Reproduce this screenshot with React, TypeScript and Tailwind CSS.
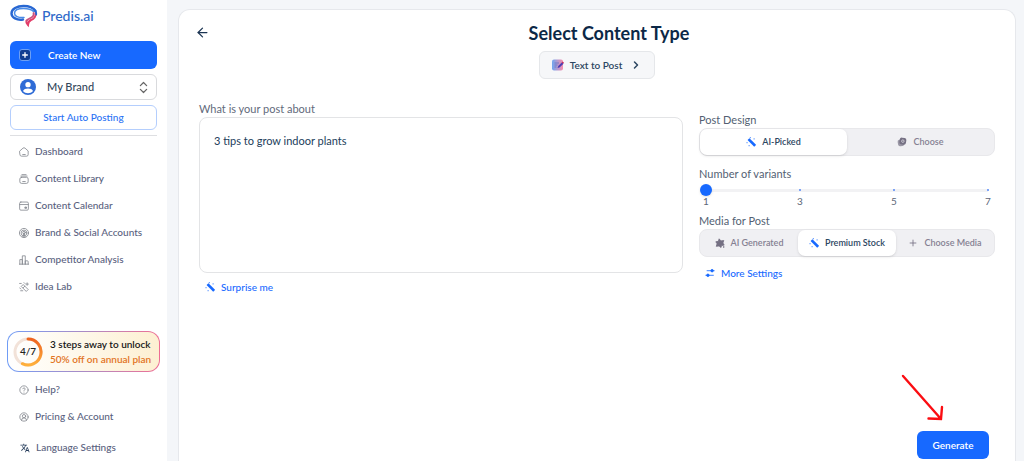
import { useState, type ComponentType, type ReactNode } from "react";
import clsx from "clsx";
import { ArrowLeft, ChevronRight, ChevronsUpDown, CircleHelp, CircleUserRound, Plus } from "lucide-react";
import { MdTranslate } from "react-icons/md";

const VARIANTS = [1, 3, 5, 7];

interface IconProps {
    className?: string;
}

function Line({ className, children }: IconProps & { children: ReactNode }) {
    return (
        <svg viewBox="0 0 24 24" fill="none" stroke="currentColor" strokeWidth="2" strokeLinecap="round" strokeLinejoin="round" className={className}>
            {children}
        </svg>
    );
}

const HomeIcon = ({ className }: IconProps) => (
    <Line className={className}>
        <path d="M2 9.500 9.500 2.800a4 4 0 0 1 5 0L22 9.500V18a4 4 0 0 1-4 4H6a4 4 0 0 1-4-4z" />
        <path d="M9 18h6" />
    </Line>
);

const LibraryIcon = ({ className }: IconProps) => (
    <Line className={className}>
        <path d="M7 1.500h10M4.500 5h15" />
        <rect x="2" y="8" width="20" height="14.500" rx="4" />
        <path d="M9 18h6" />
    </Line>
);

const CalendarIcon = ({ className }: IconProps) => (
    <Line className={className}>
        <rect x="1.500" y="2.500" width="21" height="19.500" rx="3" />
        <path d="M2 8.500h20" />
        <rect x="15" y="14.500" width="3" height="3" fill="currentColor" />
    </Line>
);

const TargetIcon = ({ className }: IconProps) => (
    <Line className={className}>
        <circle cx="12" cy="12" r="11" />
        <circle cx="12" cy="12" r="7" />
        <circle cx="12" cy="11" r="3" />
        <path d="M12 13v9M9 21l3-7 3 7" />
    </Line>
);

const ChartIcon = ({ className }: IconProps) => (
    <Line className={className}>
        <path d="M2 22V11h6v11M8 22V2h7v20M15 22v-8h5a2 2 0 0 1 2 2v6M1 22h22" />
    </Line>
);

const LabIcon = ({ className }: IconProps) => (
    <Line className={className}>
        <path d="m6 10 4-4 12 12-4 4zM10 14l4-4" />
        <path d="M1.500 3.500h4M12 1.500l2 2M19.500 2v6M16.500 5h6M1.500 14l3 3M4 21h5" />
    </Line>
);

const WandIcon = ({ className }: IconProps) => (
    <svg viewBox="0 0 24 24" fill="currentColor" className={className}>
        <path d="m6 5 16 16" stroke="currentColor" strokeWidth="6.500" />
        <g opacity=".6">
            <path d="M9 0h3v3H9zM18 3h3v3h-3zM1 12h3v3H1zM6 19h3v3H6z" />
        </g>
    </svg>
);

const SparkIcon = ({ className }: IconProps) => (
    <svg viewBox="0 0 24 24" fill="currentColor" stroke="currentColor" strokeLinejoin="round" strokeWidth="2" className={className}>
        <path d="m10 2 4 5 7-1-2 6 3 5-6 1-2 5-4-4-7 1 2-6-3-5 6-1z" />
        <circle cx="21" cy="21.500" r="1" />
    </svg>
);

const CardsIcon = ({ className }: IconProps) => (
    <svg viewBox="0 0 24 24" className={className}>
        <rect x="2" y="6" width="15" height="16" rx="5" fill="currentColor" opacity=".7" transform="rotate(-10 9 14)" />
        <rect x="6" y="2" width="16" height="16" rx="5" fill="currentColor" transform="rotate(10 14 10)" />
        <circle cx="14" cy="10" r="3" fill="none" stroke="#d6d4dc" strokeWidth="2" />
    </svg>
);

const SlidersIcon = ({ className }: IconProps) => (
    <svg viewBox="0 0 24 24" fill="none" stroke="currentColor" strokeWidth="2" className={className}>
        <path d="M4 6.500h19M1 17.500h20" />
        <circle cx="17" cy="6.500" r="3" fill="currentColor" />
        <circle cx="7" cy="17.500" r="3" fill="currentColor" />
    </svg>
);

const NoteIcon = ({ className }: IconProps) => (
    <svg viewBox="0 0 24 24" fill="none" className={className}>
        <defs>
            <linearGradient id="note" x1="0" y1="0" x2="1" y2="0">
                <stop stopColor="#6fa6f0" />
                <stop offset="1" stopColor="#f98ead" />
            </linearGradient>
        </defs>
        <rect x="0" y="1" width="22" height="22" rx="4" fill="url(#note)" />
        <path d="M5 8h9M5 12h6M5 16h4" stroke="#5f6fc0" strokeWidth="1.500" />
        <path d="m11 18 1.500-4 7.500-7.500 3 3-8 7.500z" fill="#4b3fb5" />
        <path d="m19.500 7 2-2 2.500 2.500-2 2z" fill="#c82d5c" />
    </svg>
);

function Logo() {
    return (
        <a href="#" className="flex items-center gap-1 text-[#2e69c9]">
            <svg viewBox="0 0 28 24" fill="none" strokeLinecap="round" className="h-6 w-7">
                <path d="M13 15.500C7 16.500 1.500 13.500 1.500 9.500 1.500 5 7 2 13.500 2c5.500 0 10 1.800 12 5" stroke="#2867d2" strokeWidth="2.400" />
                <path d="M14 13.500C8 14 4.500 12 4.500 9.200c0-3 4-4.700 9-4.700 4.500 0 8 1 10 3" stroke="#4a8ce8" strokeWidth="1.500" />
                <path d="M25.500 9c1 3-1.500 6-4.500 7-2 .8-2.800 2.500-3 5-1.500-1.500-2-3-1.500-4.500" stroke="#e33d68" strokeWidth="2" />
                <path d="M23.500 9c.8 2.500-1.500 4.500-4 5.500-1.500.6-2.500 1.200-3 2.500" stroke="#c9527f" strokeWidth="1.800" />
                <path d="M24 5.500c2 1.700 2.500 3 2.200 5" stroke="#2867d2" strokeWidth="1.800" />
            </svg>
            <span className="text-sm leading-6 font-medium">Predis.ai</span>
        </a>
    );
}

interface Option {
    label: string;
    icon: ComponentType<IconProps>;
}

const NAV: Option[] = [
    { label: "Dashboard", icon: HomeIcon },
    { label: "Content Library", icon: LibraryIcon },
    { label: "Content Calendar", icon: CalendarIcon },
    { label: "Brand & Social Accounts", icon: TargetIcon },
    { label: "Competitor Analysis", icon: ChartIcon },
    { label: "Idea Lab", icon: LabIcon },
];

function NavLink({ label, icon: Icon }: Option) {
    return (
        <a href="#" className="flex h-[27px] items-center gap-[6px] pl-[9px] text-[10px] font-medium text-[#59617e]">
            <Icon className="size-[10px] shrink-0 text-[#868990]" />
            {label}
        </a>
    );
}

function Sidebar() {
    return (
        <aside className="flex w-[167px] shrink-0 flex-col bg-white px-[10px] pt-1">
            <Logo />
            <button className="mt-[13px] flex h-7 items-center rounded-md bg-[#1769ff] pl-[9px] text-[10px] font-semibold text-white">
                <span className="flex size-3 items-center justify-center rounded-[3px] border border-[#6c9ff5] bg-[#123f92]">
                    <Plus className="size-2 stroke-[4]" />
                </span>
                <span className="ml-[17px]">Create New</span>
            </button>
            <button className="mt-[5px] flex h-[26px] items-center rounded-md border border-[#d9dadd] px-[9px] text-[11px] font-medium text-[#33475b]">
                <svg viewBox="0 0 24 24" className="size-4">
                    <circle cx="12" cy="12" r="12" fill="#2e6bd6" />
                    <circle cx="12" cy="8.500" r="4" fill="#fff" />
                    <path d="M4.500 18c1.500-5 13.500-5 15 0-3.500 4.500-11.500 4.500-15 0z" fill="#fff" />
                </svg>
                <span className="ml-[11px]">My Brand</span>
                <ChevronsUpDown className="ml-auto -mr-1 size-[15px] text-[#666]" />
            </button>
            <button className="mt-[5px] h-[25px] rounded-md border border-[#b4cefd] text-[10px] font-medium text-[#2b73f5]">
                Start Auto Posting
            </button>
            <nav className="mt-[5px] border-t border-[#dedfe2] pt-[2px]">
                {NAV.map((item) => (
                    <NavLink key={item.label} {...item} />
                ))}
            </nav>
            <div className="mt-auto">
                <a href="#" className="-mx-[3px] mb-1 block rounded-xl bg-linear-to-r from-[#6f9cf5] via-[#a98bc5] to-[#ee6d93] p-px">
                    <span className="flex h-[39px] items-center gap-[7px] rounded-[11px] bg-linear-to-r from-white to-[#fdf0d2] pl-[5px]">
                        <span className="relative flex size-[30px] shrink-0 items-center justify-center text-[10px] font-semibold text-[#222]">
                            <svg viewBox="0 0 30 30" fill="none" strokeWidth="3" className="absolute inset-0">
                                <defs>
                                    <linearGradient id="ring" x1="0" y1="0" x2="0" y2="1">
                                        <stop stopColor="#ee6420" />
                                        <stop offset="1" stopColor="#ffb03b" />
                                    </linearGradient>
                                </defs>
                                <circle cx="15" cy="15" r="13" stroke="#f2e2d8" />
                                <path d="M15 2A13 13 0 1 1 9.400 26.700" stroke="url(#ring)" strokeLinecap="round" />
                            </svg>
                            4/7
                        </span>
                        <span className="text-[10px] font-semibold leading-[15px] whitespace-nowrap text-[#171717]">
                            3 steps away to unlock
                            <span className="block text-[#e2741f]">50% off on annual plan</span>
                        </span>
                    </span>
                </a>
                <NavLink label="Help?" icon={CircleHelp} />
                <NavLink label="Pricing & Account" icon={CircleUserRound} />
                <a href="#" className="mt-1 flex h-[27px] items-center gap-[6px] pl-[10px] text-[10px] font-medium text-[#59617e]">
                    <MdTranslate className="size-[10px] text-[#243b5a]" />
                    Language Settings
                </a>
            </div>
        </aside>
    );
}

function Segmented({ title, options, initial }: { title: string; options: Option[]; initial: number }) {
    const [active, setActive] = useState(initial);

    return (
        <div role="group" aria-label={title}>
            <p className="text-[11px] leading-4 text-[#535f73]">{title}</p>
            <div className="flex h-7 rounded-lg border border-[#e8e8eb] bg-[#f0f0f3]">
                {options.map(({ label, icon: Icon }, i) => (
                    <button
                        key={label}
                        aria-pressed={active === i}
                        onClick={() => setActive(i)}
                        className={clsx(
                            "flex flex-1 items-center justify-center gap-[6px] rounded-[7px] text-[9px] font-semibold whitespace-nowrap",
                            active === i ? "bg-white text-[#2c4661] shadow-sm" : "text-[#858092]"
                        )}
                    >
                        <Icon className={clsx("size-[10px] shrink-0", active === i ? "text-[#1769ff]" : "text-[#757083]")} />
                        {label}
                    </button>
                ))}
            </div>
        </div>
    );
}

function VariantSlider() {
    const [value, setValue] = useState(1);

    return (
        <div className="mt-[10px]">
            <label htmlFor="variants" className="block text-[11px] leading-4 text-[#535f73]">
                Number of variants
            </label>
            <div className="relative mx-px mt-[2px] flex h-3 items-center">
                <div className="absolute inset-x-[6px] h-[3px] bg-[#f2f2f4]" />
                <div className="absolute inset-x-[5px] flex justify-between">
                    {VARIANTS.map((n) => (
                        <span key={n} className="size-0.5 rounded-full bg-[#5489f7]" />
                    ))}
                </div>
                <input
                    id="variants"
                    type="range"
                    min={1}
                    max={7}
                    value={value}
                    onChange={(e) => setValue(Number(e.target.value))}
                    className="relative h-3 w-full appearance-none bg-transparent [&::-webkit-slider-thumb]:size-3 [&::-webkit-slider-thumb]:appearance-none [&::-webkit-slider-thumb]:rounded-full [&::-webkit-slider-thumb]:bg-[#1769ff] [&::-webkit-slider-thumb]:shadow"
                />
            </div>
            <div className="mx-px flex justify-between text-[10px] leading-[10px] text-[#5c6677]">
                {VARIANTS.map((n) => (
                    <span key={n} className="w-3 text-center">{n}</span>
                ))}
            </div>
        </div>
    );
}

export default function App() {
    const [prompt, setPrompt] = useState("3 tips to grow indoor plants");

    return (
        <div className="flex min-h-screen bg-[#f4f6f9] font-['Lato',sans-serif]">
            <Sidebar />
            <main className="mt-[9px] mr-2 ml-[11px] flex flex-1 flex-col rounded-t-xl border border-b-0 border-[#e6e8ec] bg-white px-5 pb-[2px]">
                <header className="flex h-[45px] items-center">
                    <button aria-label="Back" className="-ml-1 w-7 text-[#1c3553]">
                        <ArrowLeft className="size-[15px]" />
                    </button>
                    <h1 className="flex-1 text-center text-lg font-bold text-[#0c2847]">Select Content Type</h1>
                </header>
                <button className="-mt-1 flex h-7 items-center self-center rounded-md border border-[#e5e7ea] bg-[#f6f7f9] px-3 text-[10px] font-semibold text-[#2c4661]">
                    <NoteIcon className="size-3" />
                    <span className="ml-[6px]">Text to Post</span>
                    <ChevronRight className="ml-2 size-3 stroke-[3]" />
                </button>

                <div className="mt-[22px] grid grid-cols-[484fr_296fr] gap-4">
                    <section>
                        <label htmlFor="prompt" className="block text-[11px] leading-4 text-[#626a7b]">
                            What is your post about
                        </label>
                        <textarea
                            id="prompt"
                            value={prompt}
                            onChange={(e) => setPrompt(e.target.value)}
                            className="block h-[156px] w-full resize-none rounded-lg border border-[#e3e4e6] px-[14px] py-[15px] text-[11px] leading-4 text-[#223d5b]"
                        />
                        <button className="mt-[6px] ml-[6px] flex items-center gap-[6px] text-[10px] leading-4 font-medium text-[#1769ff]">
                            <WandIcon className="size-[10px]" />
                            Surprise me
                        </button>
                    </section>
                    <section className="pt-[11px]">
                        <Segmented
                            title="Post Design"
                            initial={0}
                            options={[
                                { label: "AI-Picked", icon: WandIcon },
                                { label: "Choose", icon: CardsIcon },
                            ]}
                        />
                        <VariantSlider />
                        <div className="mt-[7px]">
                            <Segmented
                                title="Media for Post"
                                initial={1}
                                options={[
                                    { label: "AI Generated", icon: SparkIcon },
                                    { label: "Premium Stock", icon: WandIcon },
                                    { label: "Choose Media", icon: Plus },
                                ]}
                            />
                        </div>
                        <button className="mt-[8px] ml-[6px] flex items-center gap-[6px] text-[10px] leading-4 font-medium text-[#1769ff]">
                            <SlidersIcon className="size-[10px]" />
                            More Settings
                        </button>
                    </section>
                </div>

                <div className="relative mt-auto mr-[6px] self-end">
                    <svg viewBox="0 0 46 50" fill="none" stroke="#fb0d12" strokeWidth="2.400" strokeLinecap="round" className="pointer-events-none absolute right-11 bottom-full mb-2 h-[50px] w-[46px]">
                        <path d="m4 3 38 43M29.500 45.500l12.500.5 1-12" />
                    </svg>
                    <button className="h-7 w-[72px] rounded-md bg-[#1769ff] text-[10px] font-semibold text-white">Generate</button>
                </div>
            </main>
        </div>
    );
}
